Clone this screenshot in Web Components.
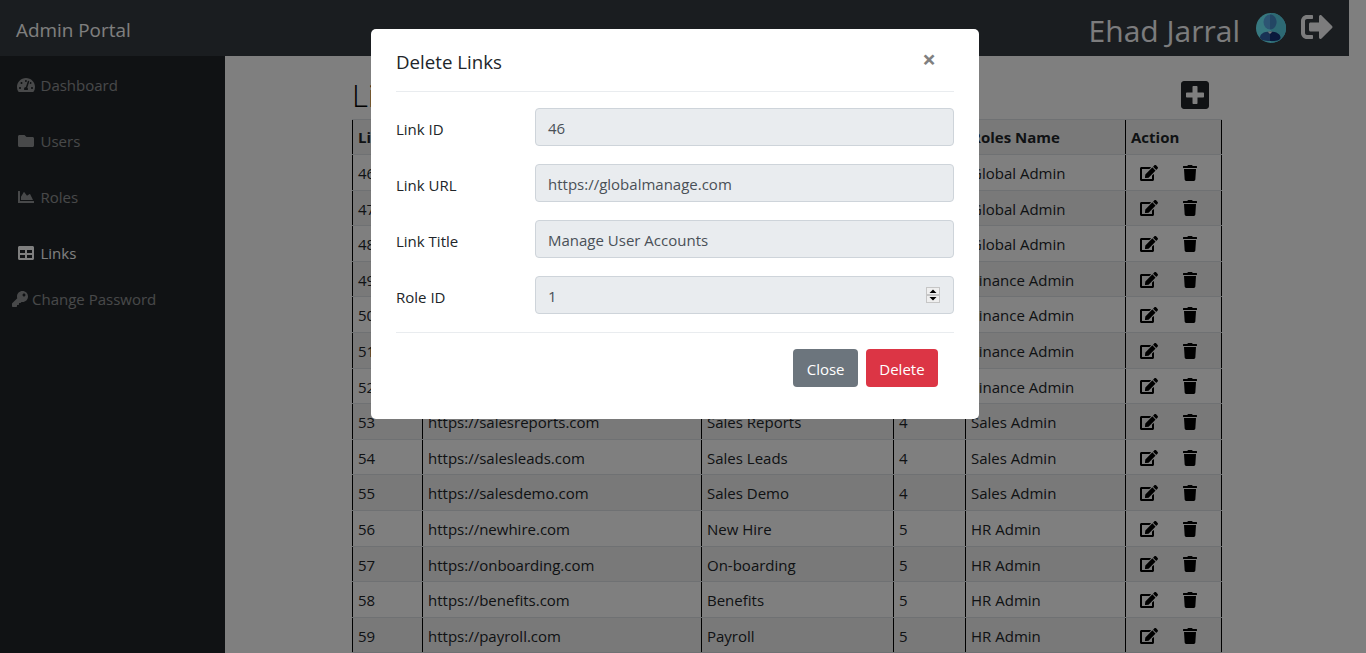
<!DOCTYPE html>
<html>
<head>
<meta charset="utf-8">
<title>Admin Portal</title>
<style>
	html, body { margin: 0; height: 100%; overflow: hidden; background: #fff; }
	body { font-family: "Open Sans", "Liberation Sans", sans-serif; font-size: 15px; color: #212529; }
</style>
</head>
<body>
<admin-shell>
	<admin-navbar slot="nav" brand="Admin Portal" user="Ehad Jarral"></admin-navbar>
	<admin-sidebar slot="side">
		<side-link icon="dashboard">Dashboard</side-link>
		<side-link icon="folder">Users</side-link>
		<side-link icon="chart">Roles</side-link>
		<side-link icon="table" active>Links</side-link>
		<side-link icon="key" compact>Change Password</side-link>
	</admin-sidebar>
	<links-page></links-page>
</admin-shell>
<delete-modal heading="Delete Links">
	<form-field label="Link ID">46</form-field>
	<form-field label="Link URL">https://globalmanage.com</form-field>
	<form-field label="Link Title">Manage User Accounts</form-field>
	<form-field label="Role ID" spinner>1</form-field>
</delete-modal>

<script>
const ICONS = {
	dashboard: ['0 0 576 512', 'M288 32C128.94 32 0 160.94 0 320c0 52.8 14.25 102.26 39.06 144.8 5.61 9.62 16.3 15.2 27.44 15.2h443c11.14 0 21.83-5.58 27.44-15.2C561.75 422.26 576 372.8 576 320c0-159.06-128.94-288-288-288zm0 64c14.71 0 26.58 10.13 30.32 23.65-1.11 2.26-2.64 4.23-3.45 6.67l-9.22 27.67c-5.13 3.49-10.97 6.01-17.64 6.01-17.67 0-32-14.33-32-32S270.33 96 288 96zM96 384c-17.67 0-32-14.33-32-32s14.33-32 32-32 32 14.33 32 32-14.33 32-32 32zm48-160c-17.67 0-32-14.33-32-32s14.33-32 32-32 32 14.33 32 32-14.33 32-32 32zm246.77-72.41l-61.33 184C343.13 347.33 352 364.54 352 384c0 11.72-3.38 22.55-8.88 32H232.88c-5.5-9.45-8.88-20.28-8.88-32 0-33.94 26.5-61.43 59.9-63.59l61.34-184.01c4.17-12.56 17.73-19.45 30.36-15.17 12.57 4.19 19.35 17.79 15.17 30.36zm14.66 57.2l15.52-46.55c3.47-1.29 7.13-2.23 11.05-2.23 17.67 0 32 14.33 32 32s-14.33 32-32 32c-11.38-.01-20.89-6.28-26.57-15.22zM480 384c-17.67 0-32-14.33-32-32s14.33-32 32-32 32 14.33 32 32-14.33 32-32 32z'],
	folder: ['0 0 512 512', 'M464 128H272l-64-64H48C21.49 64 0 85.49 0 112v288c0 26.51 21.49 48 48 48h416c26.51 0 48-21.49 48-48V176c0-26.51-21.49-48-48-48z'],
	chart: ['0 0 512 512', 'M500 384c6.6 0 12 5.4 12 12v40c0 6.6-5.4 12-12 12H12c-6.6 0-12-5.4-12-12V76c0-6.6 5.4-12 12-12h40c6.6 0 12 5.4 12 12v308h436zM372.7 159.5L288 216l-85.3-113.7c-5.1-6.8-15.5-6.3-19.9 1L96 248v104h384l-89.9-187.8c-3.2-6.5-11.4-8.7-17.4-4.7z'],
	table: ['0 0 512 512', 'M464 32H48C21.49 32 0 53.49 0 80v352c0 26.51 21.49 48 48 48h416c26.51 0 48-21.49 48-48V80c0-26.51-21.49-48-48-48zM224 416H64v-96h160v96zm0-160H64v-96h160v96zm224 160H288v-96h160v96zm0-160H288v-96h160v96z'],
	key: ['0 0 512 512', 'M512 176.001C512 273.203 433.202 352 336 352c-11.22 0-22.19-1.062-32.827-3.069l-24.012 27.014A23.999 23.999 0 0 1 261.223 384H224v40c0 13.255-10.745 24-24 24h-40v40c0 13.255-10.745 24-24 24H24c-13.255 0-24-10.745-24-24v-78.059c0-6.365 2.529-12.47 7.029-16.971l161.802-161.802C163.108 213.814 160 195.271 160 176 160 78.798 238.797.001 335.999 0 433.488-.001 512 78.511 512 176.001zM336 128c0 26.51 21.49 48 48 48s48-21.49 48-48-21.49-48-48-48-48 21.49-48 48z'],
	signout: ['0 0 512 512', 'M497 273L329 441c-15 15-41 4.5-41-17v-96H152c-13.3 0-24-10.7-24-24v-96c0-13.3 10.7-24 24-24h136V88c0-21.4 25.9-32 41-17l168 168c9.3 9.4 9.3 24.6 0 34zM192 436v-40c0-6.6-5.4-12-12-12H96c-17.7 0-32-14.3-32-32V160c0-17.7 14.3-32 32-32h84c6.6 0 12-5.4 12-12V76c0-6.6-5.4-12-12-12H96c-53 0-96 43-96 96v192c0 53 43 96 96 96h84c6.6 0 12-5.4 12-12z'],
	plus: ['0 0 448 512', 'M400 32H48C21.5 32 0 53.5 0 80v352c0 26.5 21.5 48 48 48h352c26.5 0 48-21.5 48-48V80c0-26.5-21.5-48-48-48zm-32 252c0 6.6-5.4 12-12 12h-92v92c0 6.6-5.4 12-12 12h-56c-6.6 0-12-5.4-12-12v-92H92c-6.6 0-12-5.4-12-12v-56c0-6.6 5.4-12 12-12h92v-92c0-6.6 5.4-12 12-12h56c6.6 0 12 5.4 12 12v92h92c6.6 0 12 5.4 12 12v56z'],
	edit: ['0 0 576 512', 'M402.6 83.2l90.2 90.2c3.8 3.8 3.8 10 0 13.8L274.4 405.6l-92.8 10.3c-12.4 1.4-22.9-9.1-21.5-21.5l10.3-92.8L388.8 83.2c3.8-3.8 10-3.8 13.8 0zm162-22.9l-48.8-48.8c-15.2-15.2-39.9-15.2-55.2 0l-35.4 35.4c-3.8 3.8-3.8 10 0 13.8l90.2 90.2c3.8 3.8 10 3.8 13.8 0l35.4-35.4c15.2-15.3 15.2-40 0-55.2zM384 346.2V448H64V128h229.8c3.2 0 6.2-1.3 8.5-3.5l40-40c7.6-7.6 2.2-20.5-8.5-20.5H48C21.5 64 0 85.5 0 112v352c0 26.5 21.5 48 48 48h352c26.5 0 48-21.5 48-48V306.2c0-10.7-12.9-16-20.5-8.5l-40 40c-2.2 2.3-3.5 5.3-3.5 8.5z'],
	trash: ['0 0 448 512', 'M432 32H312l-9.4-18.7A24 24 0 0 0 281.1 0H166.8a23.72 23.72 0 0 0-21.4 13.3L136 32H16A16 16 0 0 0 0 48v32a16 16 0 0 0 16 16h416a16 16 0 0 0 16-16V48a16 16 0 0 0-16-16zM53.2 467a48 48 0 0 0 47.9 45h245.8a48 48 0 0 0 47.9-45L416 128H32z']
};

function icon(name, size) {
	const [box, d] = ICONS[name];
	const w = box.split(' ')[2] / 512 * size;
	return `<svg width="${w}" height="${size}" viewBox="${box}" fill="currentColor" style="display:block;flex:none"><path d="${d}"/></svg>`;
}

class AdminShell extends HTMLElement {
	constructor() {
		super();
		let shadowRoot = this.attachShadow({mode: 'open'});
		shadowRoot.innerHTML = `
		<style>
		:host {
			display: block;
			width: 1349px;
			height: 653px;
			overflow: hidden;
		}
		.body {
			display: flex;
			height: 597px;
		}
		</style>
		<slot name="nav"></slot>
		<div class="body">
			<slot name="side"></slot>
			<slot></slot>
		</div>`;
	}
}
window.customElements.define('admin-shell', AdminShell);

class AdminNavbar extends HTMLElement {
	constructor() {
		super();
		this.attachShadow({mode: 'open'});
	}
	connectedCallback() {
		this.shadowRoot.innerHTML = `
		<style>
		:host {
			display: flex;
			height: 56px;
			align-items: center;
			background: #343a40;
			color: #fff;
			padding: 0 16px;
			box-sizing: border-box;
		}
		.brand {
			font-size: 18.9px;
			line-height: 30px;
			flex: 1;
			padding-top: 4px;
		}
		.user {
			font-size: 30px;
			line-height: 38px;
			color: #f8f9fa;
			padding-top: 5px;
		}
		.avatar {
			margin: 0 15px 0 16px;
		}
		.logout {
			color: #f8f9fa;
			margin-top: -2px;
		}
		</style>
		<span class="brand">${this.getAttribute('brand')}</span>
		<span class="user">${this.getAttribute('user')}</span>
		<svg class="avatar" width="30" height="30" viewBox="0 0 30 30">
			<defs><clipPath id="c"><circle cx="15" cy="15" r="15"/></clipPath></defs>
			<circle cx="15" cy="15" r="15" fill="#6ef0ff"/>
			<path d="M15 0a15 15 0 0 1 0 30z" fill="#5ad2e6"/>
			<g clip-path="url(#c)">
				<ellipse cx="14" cy="9" rx="6.500" ry="7.500" fill="#5aaae6"/>
				<path d="M14 1.500c3.500 0 6.500 3.500 6.500 7.500s-3 7.500-6.500 7.500z" fill="#468cc8"/>
				<path d="M4 24.500c0-3 3-6 10-6v9.500c-6 0-10-1-10-3.500z" fill="#3264aa"/>
				<path d="M14 18.500c7 0 10.500 3 10.500 6s-4.500 3.500-10.500 3.500z" fill="#143278"/>
				<path d="M11.500 18.500l2.500 2.500 2.500-2.500z" fill="#e8f0f4"/>
			</g>
		</svg>
		<span class="logout">${icon('signout', 32)}</span>`;
	}
}
window.customElements.define('admin-navbar', AdminNavbar);

class AdminSidebar extends HTMLElement {
	constructor() {
		super();
		let shadowRoot = this.attachShadow({mode: 'open'});
		shadowRoot.innerHTML = `
		<style>
		:host {
			display: block;
			flex: none;
			width: 225px;
			background: #212529;
			box-sizing: border-box;
			padding-top: 1px;
		}
		</style>
		<slot></slot>`;
	}
}
window.customElements.define('admin-sidebar', AdminSidebar);

class SideLink extends HTMLElement {
	constructor() {
		super();
		this.attachShadow({mode: 'open'});
	}
	connectedCallback() {
		const compact = this.hasAttribute('compact');
		this.shadowRoot.innerHTML = `
		<style>
		:host {
			display: flex;
			align-items: center;
			gap: 5px;
			height: 56px;
			padding-left: 16.5px;
			box-sizing: border-box;
			color: rgba(255, 255, 255, .5);
			font-size: 15px;
		}
		:host([active]) {
			color: #fff;
		}
		:host([compact]) {
			height: 36px;
			padding-left: 12px;
			gap: 4px;
		}
		.icon {
			display: flex;
			justify-content: center;
			width: ${compact ? 16 : 19}px;
		}
		</style>
		<span class="icon">${icon(this.getAttribute('icon'), 16)}</span>
		<slot></slot>`;
	}
}
window.customElements.define('side-link', SideLink);

const LINKS = [
	[46, '', '', '', 'Global Admin'],
	[47, '', '', '', 'Global Admin'],
	[48, '', '', '', 'Global Admin'],
	[49, '', '', '', 'Finance Admin'],
	[50, '', '', '', 'Finance Admin'],
	[51, '', '', '', 'Finance Admin'],
	[52, '', '', '', 'Finance Admin'],
	[53, 'https://salesreports.com', 'Sales Reports', 4, 'Sales Admin'],
	[54, 'https://salesleads.com', 'Sales Leads', 4, 'Sales Admin'],
	[55, 'https://salesdemo.com', 'Sales Demo', 4, 'Sales Admin'],
	[56, 'https://newhire.com', 'New Hire', 5, 'HR Admin'],
	[57, 'https://onboarding.com', 'On-boarding', 5, 'HR Admin'],
	[58, 'https://benefits.com', 'Benefits', 5, 'HR Admin'],
	[59, 'https://payroll.com', 'Payroll', 5, 'HR Admin']
];

class LinksPage extends HTMLElement {
	constructor() {
		super();
		let shadowRoot = this.attachShadow({mode: 'open'});
		const rows = LINKS.map(r => `
			<div class="row">
				${r.map(c => `<div class="cell">${c}</div>`).join('')}
				<div class="cell actions">${icon('edit', 16)}${icon('trash', 16)}</div>
			</div>`).join('');
		shadowRoot.innerHTML = `
		<style>
		:host {
			display: block;
			flex: 1;
			min-width: 0;
			padding: 20px 127px 0;
			box-sizing: border-box;
			background: #fff;
		}
		header {
			display: flex;
			justify-content: space-between;
			align-items: center;
			height: 38px;
			margin-bottom: 5px;
			padding-right: 13px;
		}
		h2 {
			margin: 0;
			font-size: 31px;
			font-weight: 300;
			line-height: 38px;
			color: #000;
		}
		.row {
			display: grid;
			grid-template-columns: 70px 279px 192px 72px 160px 97px;
			height: 35.6px;
			box-sizing: border-box;
			border-bottom: 1px solid #dee2e6;
		}
		.row:nth-child(even) {
			background: rgba(0, 0, 0, .05);
		}
		.head {
			height: 36px;
			font-weight: 700;
			background: rgba(0, 0, 0, .05);
			border-top: 1px solid #dee2e6;
		}
		.cell {
			border-left: 1px solid #000;
			padding-left: 5px;
			line-height: 36px;
			white-space: nowrap;
			overflow: hidden;
		}
		.head .cell {
			line-height: 34px;
		}
		.cell:last-child {
			border-right: 1px solid #000;
		}
		.actions {
			display: flex;
			align-items: center;
			gap: 25px;
			padding-left: 14px;
			color: #000;
		}
		.actions svg {
			margin-top: 1px;
		}
		</style>
		<header>
			<h2>Links</h2>
			${icon('plus', 32)}
		</header>
		<div class="row head">
			<div class="cell">Link ID</div>
			<div class="cell"></div>
			<div class="cell"></div>
			<div class="cell"></div>
			<div class="cell">Roles Name</div>
			<div class="cell">Action</div>
		</div>
		<div class="rows">${rows}</div>`;
	}
}
window.customElements.define('links-page', LinksPage);

class FormField extends HTMLElement {
	constructor() {
		super();
		this.attachShadow({mode: 'open'});
	}
	connectedCallback() {
		const spinner = this.hasAttribute('spinner') ? `
			<svg class="spin" width="14" height="16" viewBox="0 0 14 16">
				<rect width="14" height="16" fill="#c6c6c6"/>
				<rect x="1" y="1" width="12" height="6" fill="#efefef"/>
				<rect x="1" y="9" width="12" height="6" fill="#efefef"/>
				<path d="M7 2.500l3.500 3.500h-7zM7 13.500l-3.500-3.500h7z" fill="#000"/>
			</svg>` : '';
		this.shadowRoot.innerHTML = `
		<style>
		:host {
			display: grid;
			grid-template-columns: 139px 1fr;
			align-items: center;
			height: 38px;
		}
		.control {
			position: relative;
			height: 38px;
			box-sizing: border-box;
			padding: 0 12px;
			line-height: 38px;
			background: #e9ecef;
			border: 1px solid #ced4da;
			border-radius: 4px;
			color: #495057;
		}
		.spin {
			position: absolute;
			right: 13px;
			top: 10px;
		}
		.label {
			padding-top: 4px;
		}
		</style>
		<span class="label">${this.getAttribute('label')}</span>
		<div class="control"><slot></slot>${spinner}</div>`;
	}
}
window.customElements.define('form-field', FormField);

class DeleteModal extends HTMLElement {
	constructor() {
		super();
		this.attachShadow({mode: 'open'});
	}
	connectedCallback() {
		this.shadowRoot.innerHTML = `
		<style>
		:host {
			position: fixed;
			inset: 0;
			display: flex;
			justify-content: center;
			align-items: flex-start;
			padding: 29px 16px 0 0;
			background: rgba(0, 0, 0, .5);
		}
		.dialog {
			width: 608px;
			box-sizing: border-box;
			padding: 0 25px 32px;
			background: #fff;
			border-radius: 5px;
			color: #212529;
		}
		.top {
			display: flex;
			justify-content: space-between;
			align-items: center;
			height: 63px;
			box-sizing: border-box;
			border-bottom: 1px solid #e9ecef;
			padding-top: 4px;
		}
		h5 {
			margin: 0;
			font-size: 18.7px;
			font-weight: 400;
			line-height: 30px;
		}
		.close {
			font-size: 24px;
			line-height: 24px;
			font-weight: 700;
			color: #808080;
			padding-right: 18px;
			margin-top: -6px;
		}
		.fields {
			display: flex;
			flex-direction: column;
			gap: 18px;
			padding: 16px 0 18px;
			border-bottom: 1px solid #e9ecef;
		}
		.buttons {
			display: flex;
			justify-content: flex-end;
			gap: 8px;
			padding: 16px 16px 0;
		}
		.btn {
			height: 38px;
			line-height: 40px;
			padding: 0 13.4px;
			border-radius: 4px;
			color: #fff;
		}
		.grey { background: #6c757d; }
		.red { background: #dc3545; }
		</style>
		<div class="dialog">
			<div class="top">
				<h5>${this.getAttribute('heading')}</h5>
				<span class="close">×</span>
			</div>
			<div class="fields"><slot></slot></div>
			<div class="buttons">
				<span class="btn grey">Close</span>
				<span class="btn red">Delete</span>
			</div>
		</div>`;
	}
}
window.customElements.define('delete-modal', DeleteModal);
</script>
</body>
</html>
